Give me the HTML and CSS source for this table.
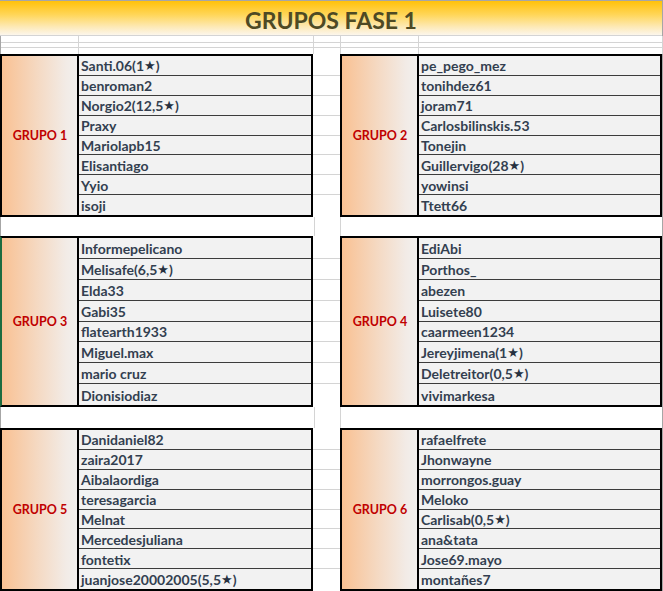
FILE: index.html
```html
<!DOCTYPE html>
<html lang="es">
<head>
<meta charset="utf-8">
<title>GRUPOS FASE 1</title>
<link rel="stylesheet" href="styles.css">
</head>
<body>
<div class="sheet">
  <div class="header"><h1 class="title">GRUPOS FASE 1</h1></div>

  <div class="spacer s1"><i></i><i></i><i></i><i></i><i></i></div>
  <div class="spacer s2"><i></i><i></i><i></i><i></i><i></i></div>
  <div class="spacer s3"><i></i><i></i><i></i><i></i><i></i></div>

  <div class="band band-a">
    <div class="block left">
      <div class="label">GRUPO 1</div>
      <div class="names">
        <div class="name">Santi.06(1<span class="star">★</span>)</div>
        <div class="name">benroman2</div>
        <div class="name">Norgio2(12,5<span class="star">★</span>)</div>
        <div class="name">Praxy</div>
        <div class="name">Mariolapb15</div>
        <div class="name">Elisantiago</div>
        <div class="name">Yyio</div>
        <div class="name">isoji</div>
      </div>
    </div>
    <div class="gapcol"><i></i><i></i><i></i><i></i><i></i><i></i><i></i><i></i></div>
    <div class="block right">
      <div class="label">GRUPO 2</div>
      <div class="names">
        <div class="name">pe_pego_mez</div>
        <div class="name">tonihdez61</div>
        <div class="name">joram71</div>
        <div class="name">Carlosbilinskis.53</div>
        <div class="name">Tonejin</div>
        <div class="name">Guillervigo(28<span class="star">★</span>)</div>
        <div class="name">yowinsi</div>
        <div class="name">Ttett66</div>
      </div>
    </div>
  </div>

  <div class="gaprow g1"><i></i><i></i><i></i></div>

  <div class="band band-b">
    <div class="block left selected">
      <div class="label">GRUPO 3</div>
      <div class="names">
        <div class="name">Informepelicano</div>
        <div class="name">Melisafe(6,5<span class="star">★</span>)</div>
        <div class="name">Elda33</div>
        <div class="name">Gabi35</div>
        <div class="name">flatearth1933</div>
        <div class="name">Miguel.max</div>
        <div class="name">mario cruz</div>
        <div class="name">Dionisiodiaz</div>
      </div>
    </div>
    <div class="gapcol"><i></i><i></i><i></i><i></i><i></i><i></i><i></i><i></i></div>
    <div class="block right">
      <div class="label">GRUPO 4</div>
      <div class="names">
        <div class="name">EdiAbi</div>
        <div class="name">Porthos_</div>
        <div class="name">abezen</div>
        <div class="name">Luisete80</div>
        <div class="name">caarmeen1234</div>
        <div class="name">Jereyjimena(1<span class="star">★</span>)</div>
        <div class="name">Deletreitor(0,5<span class="star">★</span>)</div>
        <div class="name">vivimarkesa</div>
      </div>
    </div>
  </div>

  <div class="gaprow g2"><i></i><i></i><i></i></div>

  <div class="band band-c">
    <div class="block left">
      <div class="label">GRUPO 5</div>
      <div class="names">
        <div class="name">Danidaniel82</div>
        <div class="name">zaira2017</div>
        <div class="name">Aibalaordiga</div>
        <div class="name">teresagarcia</div>
        <div class="name">Melnat</div>
        <div class="name">Mercedesjuliana</div>
        <div class="name">fontetix</div>
        <div class="name">juanjose20002005(5,5<span class="star">★</span>)</div>
      </div>
    </div>
    <div class="gapcol"><i></i><i></i><i></i><i></i><i></i><i></i><i></i><i></i></div>
    <div class="block right">
      <div class="label">GRUPO 6</div>
      <div class="names">
        <div class="name">rafaelfrete</div>
        <div class="name">Jhonwayne</div>
        <div class="name">morrongos.guay</div>
        <div class="name">Meloko</div>
        <div class="name">Carlisab(0,5<span class="star">★</span>)</div>
        <div class="name">ana&amp;tata</div>
        <div class="name">Jose69.mayo</div>
        <div class="name">montañes7</div>
      </div>
    </div>
  </div>
</div>
</body>
</html>
```

FILE: styles.css
```css
* { box-sizing: border-box; }

html, body {
  margin: 0;
  padding: 0;
  background: #ffffff;
}

body {
  font-family: Lato, "Open Sans", "DejaVu Sans", sans-serif;
  width: 663px;
  height: 591px;
  overflow: hidden;
}

.sheet {
  width: 663px;
  border-right: 1px solid #a6a6a6;
  display: flex;
  flex-direction: column;
}

.header {
  height: 36px;
  border-top: 1px solid #a6a6a6;
  border-bottom: 1px solid #d4d4d4;
  background: linear-gradient(to bottom, #ffc10a 0%, #ffd658 40%, #fde9b4 75%, #fcf6ec 100%);
  display: flex;
  justify-content: center;
  align-items: center;
}

.title {
  margin: 0;
  padding-top: 4px;
  font-size: 23px;
  font-weight: 700;
  color: #4e4a24;
  line-height: 1;
}

/* thin spreadsheet rows above the first groups */
.spacer {
  display: grid;
  grid-template-columns: 78px 235px 27px 78px 244px;
  border-left: 1px solid #a6a6a6;
}
.spacer i {
  border-right: 1px solid #d4d4d4;
  border-bottom: 1px solid #d4d4d4;
}
.s1 { height: 7px; }
.s2 { height: 5px; }
.s3 { height: 6px; }
.s3 i { border-bottom: none; }

/* bands holding two group blocks */
.band {
  display: grid;
  grid-template-columns: 313px 27px 322px;
}
.band-a { height: 163px; }
.band-b { height: 171px; }
.band-c { height: 163px; }

.block {
  border: 2px solid #000;
  display: grid;
  grid-template-columns: 77px 1fr;
}

.block.selected { border-left-color: #1d6b3f; }

.label {
  border-right: 2px solid #000;
  background: linear-gradient(to right, #f9c193 0%, #f5d8c0 45%, #f2ebe6 85%, #f2f0ee 100%);
  color: #c00000;
  font-weight: 700;
  font-size: 12.5px;
  display: flex;
  align-items: center;
  justify-content: center;
  padding-left: 1px;
}

.names {
  display: grid;
  grid-template-rows: repeat(8, 1fr);
  background: #f2f2f2;
}

.name {
  border-bottom: 1px solid #3c3c3c;
  color: #333f50;
  font-weight: 700;
  font-size: 14px;
  padding-left: 2px;
  padding-top: 1px;
  display: flex;
  align-items: center;
  white-space: nowrap;
  overflow: hidden;
}
.name:last-child { border-bottom: none; }

.star {
  font-family: "DejaVu Sans", sans-serif;
  font-size: 13px;
  color: #26303f;
}

.gapcol {
  display: grid;
  grid-template-rows: repeat(8, 1fr);
  padding: 2px 0;
}
.gapcol i {
  border-bottom: 1px solid #d4d4d4;
}
.gapcol i:last-child { border-bottom: none; }

/* empty row between bands */
.gaprow {
  display: grid;
  grid-template-columns: 313px 27px 322px;
  border-left: 1px solid #a6a6a6;
}
.gaprow i:nth-child(2) {
  border-left: 1px solid #d4d4d4;
  border-right: 1px solid #d4d4d4;
}
.g1 { height: 19px; }
.g2 { height: 21px; }
```
